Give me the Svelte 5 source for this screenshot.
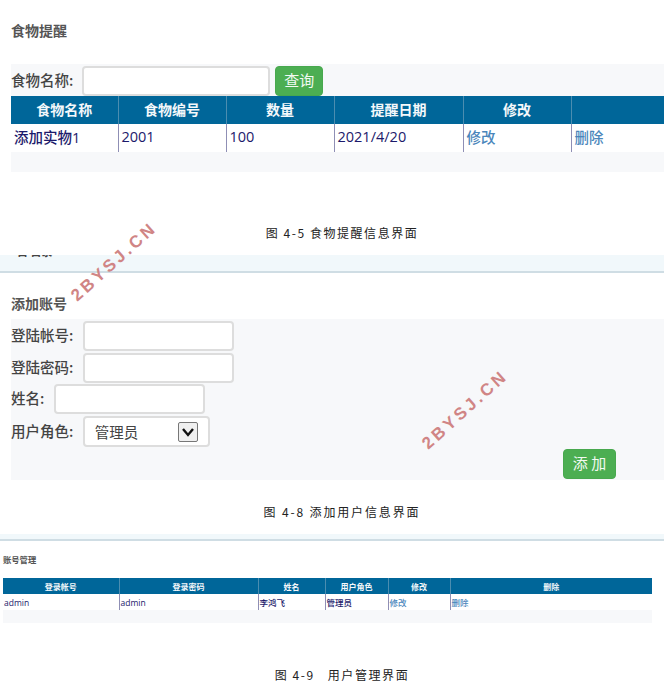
<script>
    const foodCols = ["食物名称", "食物编号", "数量", "提醒日期", "修改", ""];
    const foodRow = ["添加实物1", "2001", "100", "2021/4/20"];
    const userCols = ["登录帐号", "登录密码", "姓名", "用户角色", "修改", "删除"];
    const userRow = ["admin", "admin", "李鸿飞", "管理员"];
</script>

<div class="page">
    <section class="food">
        <h2 class="title">食物提醒</h2>
        <div class="panel">
            <div class="search">
                <span class="label">食物名称:</span>
                <input class="field search-field" type="text" />
                <button class="btn">查询</button>
            </div>
            <table class="grid food-grid">
                <thead>
                    <tr>
                        {#each foodCols as col}
                            <th>{col}</th>
                        {/each}
                    </tr>
                </thead>
                <tbody>
                    <tr>
                        {#each foodRow as cell}
                            <td>{cell}</td>
                        {/each}
                        <td><a href="#edit">修改</a></td>
                        <td><a href="#del">删除</a></td>
                    </tr>
                </tbody>
            </table>
        </div>
        <p class="caption cap-5">图 4-5 食物提醒信息界面</p>
    </section>

    <section class="add">
        <div class="band band-top"><span class="cut">首 目录</span></div>
        <h2 class="title add-title">添加账号</h2>
        <div class="panel add-panel">
            <div class="row">
                <span class="label">登陆帐号:</span>
                <input class="field" type="text" />
            </div>
            <div class="row">
                <span class="label">登陆密码:</span>
                <input class="field" type="password" />
            </div>
            <div class="row">
                <span class="label">姓名:</span>
                <input class="field" type="text" />
            </div>
            <div class="row">
                <span class="label">用户角色:</span>
                <div class="select">
                    <span>管理员</span>
                    <span class="arrow">
                        <svg width="18" height="18" viewBox="0 0 18 18">
                            <path d="M4 6 L9 12 L14 6" fill="none" stroke="#111" stroke-width="2.4" />
                        </svg>
                    </span>
                </div>
            </div>
            <div class="actions">
                <button class="btn add-btn">添 加</button>
            </div>
        </div>
        <p class="caption cap-8">图 4-8 添加用户信息界面</p>
    </section>

    <section class="users">
        <div class="band band-small"></div>
        <h2 class="small-title">账号管理</h2>
        <div class="small-panel">
            <table class="grid user-grid">
                <thead>
                    <tr>
                        {#each userCols as col}
                            <th>{col}</th>
                        {/each}
                    </tr>
                </thead>
                <tbody>
                    <tr>
                        {#each userRow as cell}
                            <td>{cell}</td>
                        {/each}
                        <td><a href="#edit">修改</a></td>
                        <td><a href="#del">删除</a></td>
                    </tr>
                </tbody>
            </table>
        </div>
        <p class="caption cap-9">图 4-9&nbsp;&nbsp;&nbsp;用户管理界面</p>
    </section>

    <span class="mark mark-a">2BYSJ.CN</span>
    <span class="mark mark-b">2BYSJ.CN</span>
</div>

<style>
    :global(body) {
        margin: 0;
        background: #ffffff;
    }

    .page {
        position: relative;
        width: 664px;
        height: 690px;
        overflow: hidden;
        font-family: "Noto Sans CJK SC", "Liberation Sans", sans-serif;
        color: #555;
    }

    section {
        display: flow-root;
    }

    .food {
        height: 255px;
    }

    .add {
        height: 279px;
    }

    .title {
        margin: 0;
        padding: 20px 0 0 11px;
        height: 64px;
        box-sizing: border-box;
        font-size: 14px;
        line-height: 20px;
        font-weight: 700;
        color: #555;
    }

    .panel {
        margin-left: 11px;
        background: #f7f8fa;
    }

    .food .panel {
        height: 108px;
    }

    .search {
        display: flex;
        align-items: center;
        height: 32px;
        padding-top: 1px;
        box-sizing: border-box;
    }

    .label {
        padding-bottom: 3px;
        font-size: 14.5px;
        font-weight: 500;
        color: #444;
        white-space: nowrap;
    }

    .field {
        display: block;
        box-sizing: border-box;
        width: 151px;
        height: 30px;
        padding: 0 8px;
        background: #fff;
        border: 2px solid #ddd;
        border-radius: 4px;
        outline: none;
    }

    .search-field {
        width: 188px;
        margin-left: 9px;
    }

    .btn {
        box-sizing: border-box;
        width: 48px;
        height: 30px;
        margin-left: 5px;
        padding: 0 0 3px;
        background: #4cae52;
        border: 1px solid #48a84e;
        border-radius: 4px;
        color: #f2faf2;
        font-family: inherit;
        font-size: 15px;
    }

    .grid {
        width: 100%;
        table-layout: fixed;
        border-collapse: collapse;
    }

    .grid th {
        box-sizing: border-box;
        background: #006699;
        color: #f4f8fb;
        font-weight: 700;
        text-align: center;
        border-left: 1px solid #4b8db0;
    }

    .grid td {
        box-sizing: border-box;
        background: #fff;
        color: #1c1a6b;
        font-family: "Open Sans", "Noto Sans CJK SC", sans-serif;
        font-weight: 500;
        border-left: 1px solid #8f8fb5;
    }

    .grid th:first-child,
    .grid td:first-child {
        border-left: none;
    }

    .grid a {
        color: #4a86bb;
        text-decoration: none;
    }

    .food-grid th {
        height: 28px;
        padding: 0 0 2px;
        font-size: 14px;
    }

    .food-grid td {
        height: 28px;
        padding: 0 3px 3px;
        font-size: 14.5px;
    }

    .food-grid th:nth-child(1) { width: 107px; }
    .food-grid th:nth-child(2) { width: 108px; }
    .food-grid th:nth-child(3) { width: 108px; }
    .food-grid th:nth-child(4) { width: 129px; }
    .food-grid th:nth-child(5) { width: 108px; }

    .caption {
        margin: 0;
        font-family: "Noto Sans CJK SC", "DejaVu Sans Mono", monospace;
        font-size: 12px;
        line-height: 16px;
        color: #222;
        text-align: center;
        white-space: nowrap;
    }

    .cap-5 {
        margin: 53px 0 0 20px;
        letter-spacing: 1.55px;
    }

    .cap-8 {
        margin-top: 24px;
        margin-left: 20px;
        letter-spacing: 1.85px;
    }

    .cap-9 {
        margin-top: 44px;
        margin-left: 20px;
        letter-spacing: 1.6px;
    }

    .band {
        background: #f1f8fb;
        border-bottom: 2px solid #cfdde4;
        box-sizing: border-box;
        overflow: hidden;
    }

    .band-top {
        height: 18px;
    }

    .cut {
        display: block;
        margin: -11px 0 0 17px;
        font-size: 11px;
        line-height: 14px;
        font-weight: 700;
        color: #444;
    }

    .add-title {
        height: 46px;
        padding: 20px 0 0 11px;
    }

    .add-panel {
        height: 161px;
        padding-top: 2px;
        box-sizing: border-box;
    }

    .row {
        display: flex;
        align-items: center;
        gap: 9.5px;
        margin-bottom: 1.7px;
    }

    .select {
        display: flex;
        align-items: center;
        justify-content: space-between;
        box-sizing: border-box;
        width: 127px;
        height: 31px;
        padding: 0 10px 0 10px;
        background: #fff;
        border: 2px solid #ddd;
        border-radius: 4px;
        font-size: 14.5px;
        color: #444;
    }

    .arrow {
        display: flex;
        box-sizing: border-box;
        width: 20px;
        height: 20px;
        background: #f0f0f0;
        border: 1px solid #777;
        border-radius: 2px;
    }

    .actions {
        display: flex;
        justify-content: flex-end;
        padding-right: 48px;
    }

    .add-btn {
        width: 53px;
        height: 30px;
        margin: 0;
    }

    .band-small {
        height: 7px;
    }

    .small-title {
        margin: 13px 0 0 3px;
        font-size: 8.3px;
        line-height: 10px;
        font-weight: 700;
        color: #555;
    }

    .small-panel {
        width: 649px;
        height: 45px;
        margin: 14px 0 0 3px;
        background: #f7f8fa;
    }

    .user-grid th {
        height: 16px;
        padding: 0;
        font-size: 8px;
    }

    .user-grid td {
        height: 16px;
        padding: 0 1px;
        font-size: 8.5px;
    }

    .user-grid th:nth-child(1) { width: 116px; }
    .user-grid th:nth-child(2) { width: 139px; }
    .user-grid th:nth-child(3) { width: 67px; }
    .user-grid th:nth-child(4) { width: 63px; }
    .user-grid th:nth-child(5) { width: 62px; }

    .mark {
        position: absolute;
        font-family: "Liberation Sans", sans-serif;
        font-size: 17px;
        font-weight: 700;
        letter-spacing: 3.2px;
        color: #d08585;
        white-space: nowrap;
        transform: rotate(-42deg);
        transform-origin: center;
    }

    .mark-a {
        left: 60px;
        top: 252px;
    }

    .mark-b {
        left: 411px;
        top: 400px;
    }
</style>
